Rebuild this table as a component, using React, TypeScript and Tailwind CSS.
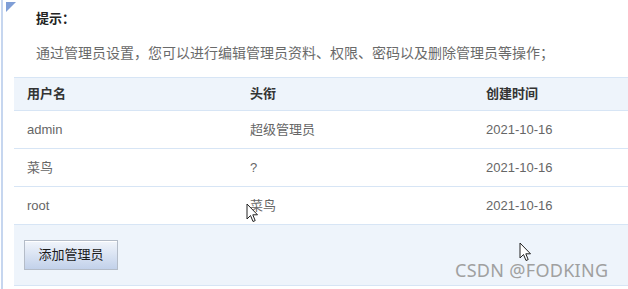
import React from 'react';

const rows = [
  { name: 'admin', title: '超级管理员', date: '2021-10-16' },
  { name: '菜鸟', title: '?', date: '2021-10-16' },
  { name: 'root', title: '菜鸟', date: '2021-10-16' },
];

const Cursor: React.FC<{ className: string }> = ({ className }) => (
  <svg className={className} width="13" height="20" viewBox="0 0 13 20">
    <path d="M1 1 L1 16 L4.5 12.5 L7 18.5 L9.2 17.6 L6.8 11.8 L11.5 11.8 Z" fill="#fff" stroke="#222" strokeWidth="1" strokeLinejoin="round" />
  </svg>
);

export default function App() {
  return (
    <div
      className="relative w-[628px] h-[289px] overflow-hidden bg-white text-[13px] text-[#555]"
      style={{ fontFamily: '"Liberation Sans", "Noto Sans CJK SC", sans-serif' }}
    >
      <div className="h-full ml-[1px] border-l-2 border-[#c6d6ef] pl-[11px]">
        {/* corner mark */}
        <svg className="absolute left-[6px] top-[2px]" width="10" height="10" viewBox="0 0 10 10">
          <path d="M0 0 L10 0 L0 10 Z" fill="#7f9ed6" />
        </svg>

        <div className="pl-[22px] pt-[9px]">
          <div className="h-[20px] leading-[20px] font-bold text-[#222]">提示：</div>
          <div className="mt-[14px] h-[20px] leading-[20px] text-[14px] text-[#6a6a6a] whitespace-nowrap">
            通过管理员设置，您可以进行编辑管理员资料、权限、密码以及删除管理员等操作；
          </div>
        </div>

        <div className="mt-[14px]">
          <div className="grid grid-cols-[223px_236px_1fr] h-[34px] items-center bg-[#eef4fb] border-t border-b border-[#d7e5f5] font-bold text-[#333]">
            <div className="pl-[13px]">用户名</div>
            <div className="pl-[13px]">头衔</div>
            <div className="pl-[13px]">创建时间</div>
          </div>
          {rows.map((r) => (
            <div
              key={r.name}
              className="grid grid-cols-[223px_236px_1fr] h-[38px] items-center border-b border-[#d7e5f5] text-[#666]"
            >
              <div className="pl-[13px]">{r.name}</div>
              <div className="pl-[13px]">{r.title}</div>
              <div className="pl-[13px]">{r.date}</div>
            </div>
          ))}
          <div className="h-[61px] bg-[#eef4fb] border-b border-[#d7e5f5] pl-[10px] pt-[15px]">
            <button className="w-[94px] h-[30px] border border-[#b4bcc8] bg-gradient-to-b from-[#f1f5fb] to-[#c2d1ea] text-[13px] text-[#1a1a1a] shadow-[inset_0_1px_0_#fff]">
              添加管理员
            </button>
          </div>
        </div>
      </div>

      <Cursor className="absolute left-[246px] top-[203px]" />
      <Cursor className="absolute left-[519px] top-[242px]" />

      <div
        className="absolute left-[455px] top-[258px] text-[18px] leading-[24px] text-[#a0a0a0] tracking-[0.3px]"
        style={{ fontFamily: '"Noto Sans", sans-serif' }}
      >
        CSDN @FODKING
      </div>
    </div>
  );
}
